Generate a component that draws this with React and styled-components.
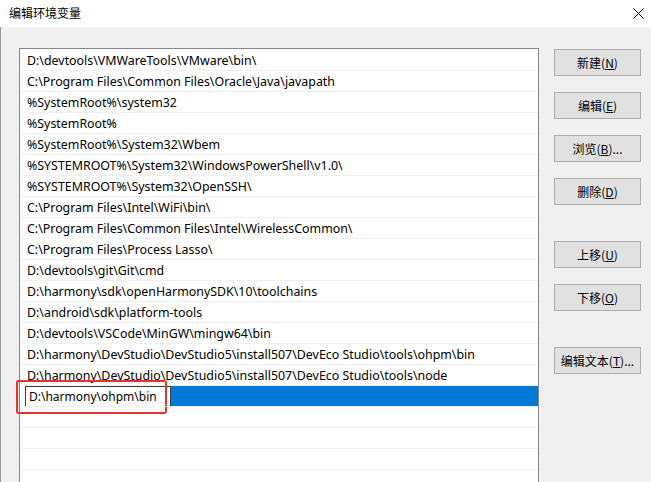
import React from "react";
import styled, { createGlobalStyle } from "styled-components";

const Global = createGlobalStyle`
  html, body { margin: 0; padding: 0; overflow: hidden; background: #f0f0f0; }
  body { width: 651px; height: 482px; font-family: "Noto Sans", "Noto Sans CJK SC", sans-serif; }
`;

const Window = styled.div`
  width: 651px;
  height: 482px;
  display: flex;
  flex-direction: column;
  overflow: hidden;
`;

const TitleBar = styled.div`
  height: 27px;
  flex: none;
  background: #ffffff;
  display: flex;
  align-items: center;
  justify-content: space-between;
  padding: 0 6px 1px 9px;
  box-sizing: border-box;
`;

const Title = styled.div`
  font-family: "Noto Sans CJK SC", sans-serif;
  font-size: 12px;
  color: #000;
  line-height: 1;
`;

const CloseButton = styled.div`
  width: 14px;
  height: 14px;
  display: flex;
  align-items: center;
  justify-content: center;
`;

const Body = styled.div`
  flex: 1;
  display: flex;
  align-items: flex-start;
  gap: 15px;
  background: #f0f0f0;
  border-left: 1px solid #9a9a9a;
  padding: 21px 0 0 18px;
  box-sizing: border-box;
`;

const ListBox = styled.div`
  width: 520px;
  height: 470px;
  flex: none;
  box-sizing: border-box;
  border: 1px solid #828790;
  background: #fff;
  display: flex;
  flex-direction: column;
`;

const Row = styled.div`
  height: 21px;
  box-sizing: border-box;
  border-top: 1px solid ${(p) => (p.$first ? "transparent" : "#f0f0f0")};
  margin-left: 1px;
  display: flex;
  align-items: center;
  padding-left: 6px;
  font-size: 12.4px;
  color: #000;
  white-space: nowrap;
  position: relative;
  background: ${(p) =>
    p.$selected ? "linear-gradient(to right, #ffffff 150px, #0078d7 150px)" : "transparent"};
  background-clip: padding-box;
`;

const EditBox = styled.div`
  position: absolute;
  left: 4px;
  top: 0px;
  width: 146px;
  height: 21px;
  box-sizing: border-box;
  background: #fff;
  border: 1px solid #3c3c3c;
  display: flex;
  align-items: center;
  padding-left: 3px;
  font-size: 12px;
  color: #000;
`;

const Highlight = styled.div`
  position: absolute;
  left: -5px;
  top: -6px;
  width: 151px;
  height: 34px;
  box-sizing: border-box;
  border: 2px solid #e8322b;
  border-radius: 3px;
  pointer-events: none;
`;

const Buttons = styled.div`
  display: flex;
  flex-direction: column;
  padding-top: 1px;
`;

const Button = styled.div`
  width: 87px;
  height: 27px;
  box-sizing: border-box;
  background: #e1e1e1;
  border: 1px solid #adadad;
  display: flex;
  align-items: center;
  justify-content: center;
  font-family: "Noto Sans CJK SC", sans-serif;
  font-size: 12px;
  color: #000;
  margin-top: ${(p) => p.$gap}px;
  white-space: nowrap;
`;

const Key = styled.span`
  text-decoration: underline;
  text-underline-offset: 1px;
`;

const items = [
  "D:\\devtools\\VMWareTools\\VMware\\bin\\",
  "C:\\Program Files\\Common Files\\Oracle\\Java\\javapath",
  "%SystemRoot%\\system32",
  "%SystemRoot%",
  "%SystemRoot%\\System32\\Wbem",
  "%SYSTEMROOT%\\System32\\WindowsPowerShell\\v1.0\\",
  "%SYSTEMROOT%\\System32\\OpenSSH\\",
  "C:\\Program Files\\Intel\\WiFi\\bin\\",
  "C:\\Program Files\\Common Files\\Intel\\WirelessCommon\\",
  "C:\\Program Files\\Process Lasso\\",
  "D:\\devtools\\git\\Git\\cmd",
  "D:\\harmony\\sdk\\openHarmonySDK\\10\\toolchains",
  "D:\\android\\sdk\\platform-tools",
  "D:\\devtools\\VSCode\\MinGW\\mingw64\\bin",
  "D:\\harmony\\DevStudio\\DevStudio5\\install507\\DevEco Studio\\tools\\ohpm\\bin",
  "D:\\harmony\\DevStudio\\DevStudio5\\install507\\DevEco Studio\\tools\\node",
];

const buttons = [
  { pre: "新建(", key: "N", post: ")", gap: 0 },
  { pre: "编辑(", key: "E", post: ")", gap: 16 },
  { pre: "浏览(", key: "B", post: ")...", gap: 16 },
  { pre: "删除(", key: "D", post: ")", gap: 16 },
  { pre: "上移(", key: "U", post: ")", gap: 36 },
  { pre: "下移(", key: "O", post: ")", gap: 16 },
  { pre: "编辑文本(", key: "T", post: ")...", gap: 36 },
];

export default function App() {
  return (
    <>
      <Global />
      <Window>
        <TitleBar>
          <Title>编辑环境变量</Title>
          <CloseButton>
            <svg width="11" height="11" viewBox="0 0 11 11">
              <path d="M0.5 0.5 L10.5 10.5 M10.5 0.5 L0.5 10.5" stroke="#000" strokeWidth="1" fill="none" />
            </svg>
          </CloseButton>
        </TitleBar>
        <Body>
          <ListBox>
            {items.map((t, i) => (
              <Row key={i} $first={i === 0}>{t}</Row>
            ))}
            <Row $selected>
              <EditBox>D:\harmony\ohpm\bin</EditBox>
              <Highlight />
            </Row>
            <Row />
            <Row />
            <Row />
            <Row />
          </ListBox>
          <Buttons>
            {buttons.map((b, i) => (
              <Button key={i} $gap={b.gap}>
                {b.pre}
                <Key>{b.key}</Key>
                {b.post}
              </Button>
            ))}
          </Buttons>
        </Body>
      </Window>
    </>
  );
}
